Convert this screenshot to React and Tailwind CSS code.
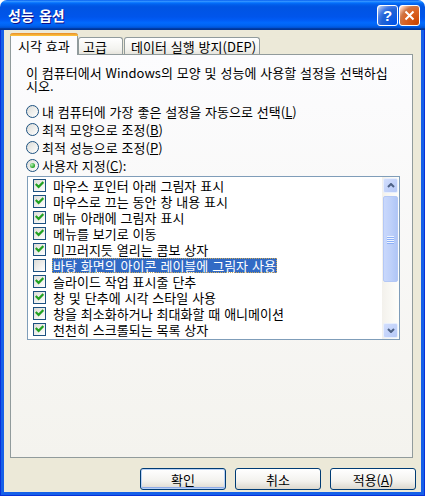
import React from 'react';

const font = "font-['Noto_Sans_CJK_KR',sans-serif]";

const items = [
  { label: '마우스 포인터 아래 그림자 표시', checked: true },
  { label: '마우스로 끄는 동안 창 내용 표시', checked: true },
  { label: '메뉴 아래에 그림자 표시', checked: true },
  { label: '메뉴를 보기로 이동', checked: true },
  { label: '미끄러지듯 열리는 콤보 상자', checked: true },
  { label: '바탕 화면의 아이콘 레이블에 그림자 사용', checked: false, selected: true },
  { label: '슬라이드 작업 표시줄 단추', checked: true },
  { label: '창 및 단추에 시각 스타일 사용', checked: true },
  { label: '창을 최소화하거나 최대화할 때 애니메이션', checked: true },
  { label: '천천히 스크롤되는 목록 상자', checked: true },
];

const Check = ({ checked }) => (
  <span className="shrink-0 w-[13px] h-[13px] border border-[#1c5180] bg-[linear-gradient(135deg,#dcdcd7,#ffffff)] flex items-center justify-center">
    {checked && (
      <svg width="9" height="9" viewBox="0 0 9 9">
        <path d="M1.5 3.8 L3.6 5.9 L7.6 1.9" stroke="#21a121" strokeWidth="2.2" fill="none" strokeLinecap="square" />
      </svg>
    )}
  </span>
);

const Radio = ({ on, children }) => (
  <div className="h-[18px] flex items-center gap-[3px]">
    <span className="shrink-0 w-[13px] h-[13px] rounded-full border border-[#1c5180] bg-[linear-gradient(135deg,#dcdcd7,#ffffff)] flex items-center justify-center">
      {on && <span className="w-[5px] h-[5px] rounded-full bg-[radial-gradient(circle_at_35%_35%,#b8f0b8,#21a121_70%)]" />}
    </span>
    <span className="leading-[13px]">{children}</span>
  </div>
);

const Chevron = ({ down }) => (
  <svg width="8" height="5" viewBox="0 0 8 5">
    <path d={down ? 'M1 1 L4 4 L7 1' : 'M1 4 L4 1 L7 4'} stroke="#4d6185" strokeWidth="2" fill="none" />
  </svg>
);

const ScrollBtn = ({ down }) => (
  <div className="h-[17px] p-px">
    <div className="h-full rounded-[2px] border border-[#e8effd] bg-[linear-gradient(135deg,#d2defd,#b6c9f7)] flex items-center justify-center">
      <Chevron down={down} />
    </div>
  </div>
);

const Button = ({ children, def }) => (
  <button
    className={`w-[86px] h-[22px] rounded-[3px] border border-[#003c74] bg-[linear-gradient(to_bottom,#ffffff,#f3f2ee_60%,#dcd8ce)] text-[13px] leading-[13px] text-black ${
      def ? 'shadow-[inset_0_0_0_1px_#b9d1f5,inset_0_-2px_0_#8fabe8]' : ''
    }`}
  >
    {children}
  </button>
);

export default function App() {
  return (
    <div className={`w-[425px] h-[496px] flex flex-col ${font} text-[13px] [word-spacing:1px] text-black select-none`}>
      {/* title bar */}
      <div className="h-[30px] shrink-0 rounded-t-[7px] flex items-center pl-[8px] pr-[5px] bg-[linear-gradient(to_bottom,#0058ee_0%,#3593ff_4%,#288eff_6%,#127dff_8%,#036ffc_10%,#0262ee_14%,#0057e5_20%,#0054e3_24%,#0055eb_56%,#005bf5_66%,#026afe_76%,#0062ef_86%,#0052d6_92%,#0040ab_94%,#003092_100%)]">
        <span className="text-white font-bold text-[14px] leading-[14px] [word-spacing:2px] [text-shadow:1px_1px_#0f1089]">성능 옵션</span>
        <div className="ml-auto flex gap-px">
          <div className="w-[21px] h-[21px] rounded-[3px] border border-white bg-[radial-gradient(circle_at_90%_90%,#0054e9_0%,#2263d5_55%,#4479e4_70%,#a3bbec_90%,#ffffff_100%)] flex items-center justify-center text-white font-bold text-[15px] leading-none font-['Liberation_Sans',sans-serif]">
            ?
          </div>
          <div className="w-[21px] h-[21px] rounded-[3px] border border-white bg-[radial-gradient(circle_at_90%_90%,#cc4600_0%,#dc6527_55%,#cd7546_70%,#ffccb2_90%,#ffffff_100%)] flex items-center justify-center">
            <svg width="11" height="11" viewBox="0 0 11 11">
              <path d="M1.5 1.5 L9.5 9.5 M9.5 1.5 L1.5 9.5" stroke="#ffffff" strokeWidth="2" />
            </svg>
          </div>
        </div>
      </div>

      {/* frame + body */}
      <div className="flex-1 bg-[#0831d9] px-px pb-px flex">
        <div className="flex-1 border-x-[3px] border-b-[3px] border-[#1660e8] bg-[#ece9d8] flex flex-col pt-[3px]">
          {/* tabs */}
          <div className="h-[21px] flex items-end pl-[6px] relative z-10">
            <div className="w-[68px] h-[22px] -mb-px rounded-t-[3px] border-x border-[#919b9c] bg-[#fcfcfe] flex flex-col">
              <div className="h-[3px] rounded-t-[3px] bg-[linear-gradient(to_bottom,#e68b2c,#ffc73c)] -mx-px" />
              <div className="flex-1 pl-[7px] flex items-center leading-[13px]">시각 효과</div>
            </div>
            <div className="w-[45px] h-[17px] rounded-t-[3px] border border-b-0 border-[#919b9c] bg-[linear-gradient(to_bottom,#ffffff,#f3f3ef_70%,#e6e4dc)] pl-[4px] pt-px flex items-center leading-[13px]">
              고급
            </div>
            <div className="w-[136px] h-[17px] ml-[1px] rounded-t-[3px] border border-b-0 border-[#919b9c] bg-[linear-gradient(to_bottom,#ffffff,#f3f3ef_70%,#e6e4dc)] pl-[6px] pt-px flex items-center leading-[13px]">
              데이터 실행 방지(DEP)
            </div>
          </div>

          {/* panel */}
          <div className="ml-[6px] w-[403px] h-[404px] border border-[#919b9c] bg-[linear-gradient(to_bottom,#fcfcfe,#f4f3ee)] pl-[15px] pt-[11px] flex flex-col">
            <p className="leading-[13px] whitespace-nowrap">
              이 컴퓨터에서 Windows의 모양 및 성능에 사용할 설정을 선택하십
              <br />
              시오.
            </p>
            <div className="mt-[10px] flex flex-col">
              <Radio>
                내 컴퓨터에 가장 좋은 설정을 자동으로 선택(<u>L</u>)
              </Radio>
              <Radio>
                최적 모양으로 조정(<u>B</u>)
              </Radio>
              <Radio>
                최적 성능으로 조정(<u>P</u>)
              </Radio>
              <Radio on>
                사용자 지정(<u>C</u>):
              </Radio>
            </div>

            {/* list */}
            <div className="mt-[2px] ml-[1px] w-[373px] h-[164px] border border-[#7f9db9] bg-white flex">
              <div className="flex-1 flex flex-col">
                {items.map((it) => (
                  <div key={it.label} className="h-[16px] flex items-center pl-[5px] gap-[6px]">
                    <Check checked={it.checked} />
                    <span
                      className={`px-px h-[15px] flex items-center leading-[13px] whitespace-nowrap ${
                        it.selected ? 'bg-[#316ac5] text-white outline outline-1 outline-dotted outline-[#c8a85c] -outline-offset-1' : ''
                      }`}
                    >
                      {it.label}
                    </span>
                  </div>
                ))}
              </div>
              <div className="w-[17px] flex flex-col bg-[linear-gradient(to_right,#f3f1ec,#fefefb)]">
                <ScrollBtn />
                <div className="h-[2px]" />
                <div className="h-[86px] px-px">
                  <div className="h-full rounded-[2px] border border-[#b4c8f6] bg-[linear-gradient(to_right,#c9d8fc,#bccff9_60%,#b0c6f6)] flex flex-col items-center justify-center gap-px">
                    {[0, 1, 2, 3].map((i) => (
                      <div key={i} className="w-[7px] h-px bg-[#eef4fe] shadow-[0_1px_0_#8cb0f8]" />
                    ))}
                  </div>
                </div>
                <div className="flex-1" />
                <ScrollBtn down />
              </div>
            </div>
          </div>

          {/* buttons */}
          <div className="mt-[10px] flex justify-end gap-[9px] pr-[5px]">
            <Button def>확인</Button>
            <Button>취소</Button>
            <Button>
              적용(<u>A</u>)
            </Button>
          </div>
        </div>
      </div>
    </div>
  );
}
